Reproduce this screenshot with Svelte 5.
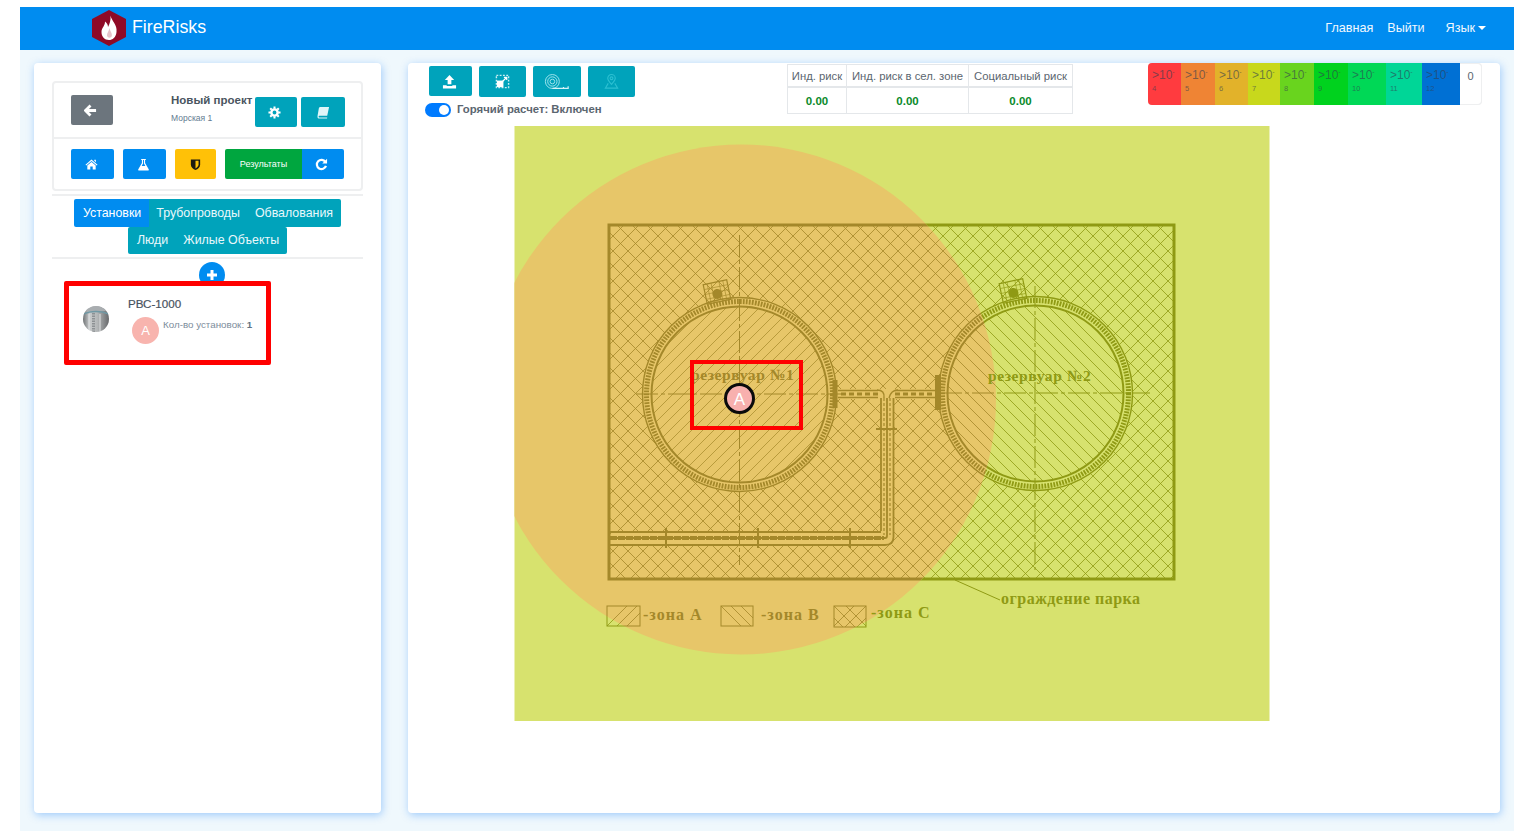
<script>
  const scale = [
    { exp: 4, bg: '#ff3b3f' },
    { exp: 5, bg: '#ef8434' },
    { exp: 6, bg: '#e2b22a' },
    { exp: 7, bg: '#c8d81c' },
    { exp: 8, bg: '#69d41e' },
    { exp: 9, bg: '#00d21e' },
    { exp: 10, bg: '#00d856' },
    { exp: 11, bg: '#00d697' },
    { exp: 12, bg: '#0070d4' }
  ];
  const risks = [
    { label: 'Инд. риск', value: '0.00' },
    { label: 'Инд. риск в сел. зоне', value: '0.00' },
    { label: 'Социальный риск', value: '0.00' }
  ];

  // diagonal hatch lines, cut to shape later by a clip path
  function slashes(x0, y0, size, step) {
    let d = '';
    for (let x = x0; x <= x0 + 2 * size; x += step) d += `M${x} ${y0}L${x - size} ${y0 + size}`;
    return d;
  }
  function backslashes(x0, y0, size, step) {
    let d = '';
    for (let x = x0 - size; x <= x0 + size; x += step) d += `M${x} ${y0}L${x + size} ${y0 + size}`;
    return d;
  }
  const crossHatch = slashes(609, 225, 565, 15) + backslashes(612, 225, 565, 15);
  const hatchA = slashes(640, 295, 200, 11);
  const hatchB = backslashes(936, 294, 200, 12);
</script>

<div class="page">
  <nav class="navbar">
    <div class="brand">
      <svg class="logo" viewBox="0 0 36 38" width="36" height="38">
        <path d="M18 1 L35 10 V28 L18 37 L1 28 V10 Z" fill="#8f0a26" />
        <path d="M19.500 6.500 C20.500 12 26.500 15.500 25.500 23 C25 28.500 21.500 31 18 31 C13.500 31 10.500 27.500 10.500 23 C10.500 18.500 14 17.500 14 12.500 C16 14 17 16 17 18 C18.500 15 20 11.500 19.500 6.500 Z" fill="#fff" />
        <path d="M18.500 19 C19 22.500 21.500 24 20.800 27 C20 29.500 16.500 29.200 16 26.500 C15.800 24 17.800 22.500 18.500 19 Z" fill="#e6c3ca" />
      </svg>
      <span class="brand-name">FireRisks</span>
    </div>
    <div class="nav-links">
      <span>Главная</span>
      <span>Выйти</span>
      <span class="lang">Язык<i class="caret"></i></span>
    </div>
  </nav>

  <div class="content">
    <aside class="card side">
      <div class="project">
        <div class="project-head">
          <button class="btn gray back" aria-label="Назад">
            <svg viewBox="0 0 14 14" width="13" height="13"><path d="M7 1.500 L1.500 7 L7 12.500 M2 7 H13" fill="none" stroke="#fff" stroke-width="3" /></svg>
          </button>
          <div class="project-name">
            <b>Новый проект</b>
            <small>Морская 1</small>
          </div>
          <button class="btn teal gear" aria-label="Настройки">
            <svg viewBox="0 0 14 14" width="13" height="13">
              <circle cx="7" cy="7" r="3.400" fill="none" stroke="#fff" stroke-width="2.600" />
              <path d="M7 0.500 V3 M7 11 V13.500 M0.500 7 H3 M11 7 H13.500 M2.400 2.400 L4 4 M10 10 L11.600 11.600 M11.600 2.400 L10 4 M4 10 L2.400 11.600" stroke="#fff" stroke-width="2.200" />
            </svg>
          </button>
          <button class="btn teal book" aria-label="Справочник">
            <svg viewBox="0 0 14 14" width="13" height="13">
              <path d="M4 1 H13 L11 10.500 H2.500 C1.500 10.500 1.500 12.500 2.500 12.500 H11 L10.800 13.500 H2 C0.500 13.500 0.300 11.500 0.700 10 L2 2.500 C2.200 1.500 3 1 4 1 Z" fill="#dff5f8" />
            </svg>
          </button>
        </div>
        <div class="project-nav">
          <button class="btn blue nav-a" aria-label="Главная">
            <svg viewBox="0 0 14 14" width="13" height="13"><path d="M7 1.500 L13.500 7.200 L12.700 8 L7 3.200 L1.300 8 L0.500 7.200 Z M2.500 8 L7 4.300 L11.500 8 V12.500 H8.300 V9.200 H5.700 V12.500 H2.500 Z M10 2 H11.700 V4.500 L10 3 Z" fill="#fff" /></svg>
          </button>
          <button class="btn blue nav-b" aria-label="Вещества">
            <svg viewBox="0 0 14 14" width="13" height="13"><path d="M4.500 1 H9.500 V2.200 H8.700 V5.500 L12.600 12 C13 12.800 12.500 13.500 11.700 13.500 H2.300 C1.500 13.500 1 12.800 1.400 12 L5.300 5.500 V2.200 H4.500 Z M6.500 2.200 V5.900 L5 8.500 H9 L7.500 5.900 V2.200 Z" fill="#fff" fill-rule="evenodd" /></svg>
          </button>
          <button class="btn yellow nav-c" aria-label="Защита">
            <svg viewBox="0 0 14 14" width="13" height="13"><path d="M2 1.500 H12 V7 C12 10 9.500 12 7 13 C4.500 12 2 10 2 7 Z" fill="#1d1a10" /><path d="M7 3 H10.300 V7 C10.300 9 8.500 10.400 7 11.200 Z" fill="#ffc107" /></svg>
          </button>
          <div class="result-group">
            <button class="btn green results">Результаты</button>
            <button class="btn blue refresh" aria-label="Обновить">
              <svg viewBox="0 0 14 14" width="13" height="13"><path d="M11.200 4.200 A5 5 0 1 0 11.800 8.500" fill="none" stroke="#fff" stroke-width="2.400" /><path d="M13 0.800 V6 H7.800 Z" fill="#fff" /></svg>
            </button>
          </div>
        </div>
      </div>

      <hr class="rule" />

      <div class="tabs">
        <div class="tab-row">
          <span class="tab active">Установки</span>
          <span class="tab">Трубопроводы</span>
          <span class="tab">Обвалования</span>
        </div>
        <div class="tab-row">
          <span class="tab">Люди</span>
          <span class="tab">Жилые Объекты</span>
        </div>
      </div>

      <hr class="rule second" />

      <button class="add" aria-label="Добавить">
        <svg viewBox="0 0 12 12" width="12" height="12"><path d="M6 1 V11 M1 6 H11" stroke="#fff" stroke-width="3" /></svg>
      </button>

      <div class="unit">
        <svg class="unit-icon" viewBox="0 0 26 26" width="26" height="26">
          <defs>
            <linearGradient id="tankGrad" x1="0" x2="1" y1="0" y2="0">
              <stop offset="0" stop-color="#6f7274" />
              <stop offset=".25" stop-color="#c9cccd" />
              <stop offset=".55" stop-color="#b4b7b8" />
              <stop offset="1" stop-color="#67696b" />
            </linearGradient>
            <clipPath id="tankIconClip"><circle cx="13" cy="13" r="13" /></clipPath>
          </defs>
          <g clip-path="url(#tankIconClip)">
            <rect width="26" height="26" fill="url(#tankGrad)" />
            <rect width="26" height="5" fill="#a9adb0" />
            <path d="M0 8 C8 5 18 5 26 8" fill="none" stroke="#6f98a4" stroke-width="1.500" />
            <path d="M10.500 7 V26" stroke="#8d9194" stroke-width="3" stroke-dasharray="1.500 1" />
            <path d="M6 8 V26 M17 8 V26" stroke="#dfe1e2" stroke-width="1" />
          </g>
        </svg>
        <div class="unit-body">
          <div class="unit-name">РВС-1000</div>
          <div class="unit-meta">
            <span class="zone-badge">А</span>
            <span class="unit-count">Кол-во установок: <b>1</b></span>
          </div>
        </div>
      </div>
    </aside>

    <main class="card workspace">
      <div class="top">
        <div class="tools">
          <div class="tool-row">
            <button class="btn teal t1" aria-label="Загрузить">
              <svg viewBox="0 0 16 16" width="15" height="15"><path d="M8 1 L13 6.500 H10 V11 H6 V6.500 H3 Z M1 12 H5 V12.800 H11 V12 H15 V15.500 H1 Z" fill="#fff" /></svg>
            </button>
            <button class="btn teal t2" aria-label="Область">
              <svg viewBox="0 0 16 16" width="15" height="15">
                <rect x="1.500" y="1.500" width="13" height="13" fill="none" stroke="#c9eef4" stroke-width="1.500" stroke-dasharray="2 1.500" />
                <path d="M2 7 H9 V14 H2 Z" fill="#fff" />
                <path d="M8 8 L12 4 M9.500 3.500 H12.500 V6.500" fill="none" stroke="#fff" stroke-width="1.300" />
              </svg>
            </button>
            <button class="btn teal t3" aria-label="Измерение">
              <svg viewBox="0 0 28 18" width="26" height="17" fill="none" stroke="#a5e6ef" stroke-width="1">
                <circle cx="9" cy="9" r="7.500" />
                <circle cx="9" cy="9" r="5" />
                <circle cx="9" cy="9" r="2.500" />
                <path d="M9 16.500 H26 V14 M21 16.500 V15" stroke="#d5f3f7" stroke-width="1.300" />
              </svg>
            </button>
            <button class="btn teal t4" aria-label="Точка">
              <svg viewBox="0 0 16 18" width="15" height="17" fill="none" stroke="#2cc0d2" stroke-width="1.200">
                <path d="M8 12 C5 8.500 4 7.500 4 5.500 A4 4 0 0 1 12 5.500 C12 7.500 11 8.500 8 12 Z" />
                <circle cx="8" cy="5.500" r="1.500" />
                <path d="M4.500 11 L1.500 16 H14.500 L11.500 11" />
              </svg>
            </button>
          </div>
          <div class="hot">
            <span class="switch"><i></i></span>
            <span class="hot-label">Горячий расчет: Включен</span>
          </div>
        </div>

        <div class="risk-table">
          {#each risks as r}
            <div class="risk-head">{r.label}</div>
          {/each}
          {#each risks as r}
            <div class="risk-val">{r.value}</div>
          {/each}
        </div>

        <div class="legend">
          {#each scale as s}
            <div class="seg" style="background: {s.bg}">
              <span class="seg-top">&gt;10<sup>-</sup></span>
              <span class="seg-exp">{s.exp}</span>
            </div>
          {/each}
          <div class="seg zero">0</div>
        </div>
      </div>

      <svg class="map" viewBox="514 126 756 595" width="756" height="595">
        <defs>
          <clipPath id="mapClip"><rect x="514.500" y="126" width="755" height="595" /></clipPath>
          <clipPath id="fenceClip"><rect x="609" y="225" width="565" height="354" /></clipPath>
          <clipPath id="hotClip"><circle cx="741" cy="399.500" r="255" /></clipPath>
          <clipPath id="coldClip">
            <path clip-rule="evenodd" d="M514 126 H1270 V721 H514 Z M486 399.500 A255 255 0 1 0 996 399.500 A255 255 0 1 0 486 399.500 Z" />
          </clipPath>
          <clipPath id="tank1Clip"><circle cx="739.500" cy="394.500" r="88" /></clipPath>
          <clipPath id="tank2Clip"><circle cx="1035.500" cy="393.500" r="88" /></clipPath>
          <mask id="crossMask" maskUnits="userSpaceOnUse" x="514" y="126" width="756" height="595">
            <rect x="514" y="126" width="756" height="595" fill="#fff" />
            <circle cx="739.500" cy="394.500" r="97" fill="#000" />
            <circle cx="1035.500" cy="393.500" r="97" fill="#000" />
            <rect x="838" y="389" width="100" height="10" fill="#000" />
            <rect x="881" y="392" width="12" height="153" fill="#000" />
            <rect x="611" y="532" width="282" height="13" fill="#000" />
          </mask>
          <g id="plan" fill="none" stroke="currentColor">
            <rect x="609" y="225" width="565" height="354" stroke-width="3" />
            <g clip-path="url(#fenceClip)">
              <g mask="url(#crossMask)"><path d={crossHatch} stroke-width=".8" /></g>
            </g>
            <g clip-path="url(#tank1Clip)"><path d={hatchA} stroke-width=".7" /></g>
            <g clip-path="url(#tank2Clip)"><path d={hatchB} stroke-width=".8" /></g>

            <!-- tanks -->
            <circle cx="739.500" cy="394.500" r="97" stroke-width="1.400" />
            <circle cx="739.500" cy="394.500" r="93" stroke-width="5" stroke-dasharray="1.800 1.200" />
            <circle cx="739.500" cy="394.500" r="88" stroke-width="2" />
            <circle cx="1035.500" cy="393.500" r="97" stroke-width="1.400" />
            <circle cx="1035.500" cy="393.500" r="93" stroke-width="5" stroke-dasharray="1.800 1.200" />
            <circle cx="1035.500" cy="393.500" r="88" stroke-width="2" />

            <!-- axes -->
            <path d="M739.500 235 V565 M636 394 H845" stroke-width="1" stroke-dasharray="22 3 4 3" />
            <path d="M1035 286 V570 M940 393 H1150" stroke-width="1" stroke-dasharray="22 3 4 3" />

            <!-- hatches at tank roofs -->
            <g transform="rotate(-12 717 292)">
              <rect x="705" y="282" width="24" height="20" stroke-width="1.200" />
              <path d="M709 282 V302 M713 282 V302 M721 282 V302 M725 282 V302 M705 287 H729 M705 292 H729 M705 297 H729" stroke-width=".6" />
              <circle cx="717" cy="294" r="5" fill="currentColor" stroke="none" />
            </g>
            <g transform="rotate(-12 1013 291)">
              <rect x="1001" y="281" width="24" height="20" stroke-width="1.200" />
              <path d="M1005 281 V301 M1009 281 V301 M1017 281 V301 M1021 281 V301 M1001 286 H1025 M1001 291 H1025 M1001 296 H1025" stroke-width=".6" />
              <circle cx="1013" cy="293" r="5" fill="currentColor" stroke="none" />
            </g>

            <!-- pipes -->
            <path d="M835 380 V408" stroke-width="5" />
            <path d="M938 375 V410" stroke-width="6" />
            <path d="M838 390.500 H878 M838 397.500 H878 M895 390.500 H936 M895 397.500 H936" stroke-width="1.600" />
            <path d="M841 394 H878 M895 394 H936" stroke-width="3" stroke-dasharray="5 3" />
            <path d="M877 390 Q885 390 884 398 M898 390 Q891 390 889 398" stroke-width="1.400" />
            <path d="M881 398 V531 M893.500 398 V537 Q893.500 545 885 545 H610 M887 398 V536 Q887 538 885 538 H610 M610 532 H881" stroke-width="1.800" />
            <path d="M884 398 V535 M890 398 V535" stroke-width="1.200" stroke-dasharray="3 2" />
            <path d="M610 538 H884" stroke-width="4" stroke-dasharray="7 1" />
            <path d="M876 429 H897" stroke-width="2" />
            <path d="M666 528 V548 M758 528 V548 M850 528 V548" stroke-width="2" />

            <!-- leader line -->
            <path d="M955 580 L1000 600" stroke-width="1" />

            <!-- legend boxes -->
            <rect x="607" y="606" width="33" height="20" stroke-width="1" />
            <path d="M607 626 L627 606 M617 626 L637 606 M627 626 L640 613" stroke-width=".8" />
            <rect x="721" y="606" width="32" height="20" stroke-width="1" />
            <path d="M721 606 L741 626 M731 606 L751 626 M741 606 L753 618" stroke-width=".8" />
            <rect x="834" y="606" width="32" height="21" stroke-width="1" />
            <path d="M834 606 L855 627 M846 606 L866 626 M834 618 L843 627 M866 606 L845 627 M854 606 L834 626 M866 618 L857 627" stroke-width=".8" />
          </g>
        </defs>

        <g clip-path="url(#mapClip)">
          <rect x="514" y="126" width="756" height="595" fill="#d7e26e" />
          <circle cx="741" cy="399.500" r="255" fill="#e7c669" />
        </g>
        <g clip-path="url(#hotClip)" style="color: #a4882a"><use href="#plan" /></g>
        <g clip-path="url(#coldClip)" style="color: #8f9a14"><use href="#plan" /></g>

        <g class="plan-text">
          <text class="t-hot tank-name" x="691" y="380">резервуар №1</text>
          <text class="t-cold tank-name" x="988" y="381">резервуар №2</text>
          <text class="t-hot zone" x="643" y="620">-зона А</text>
          <text class="t-hot zone" x="761" y="620">-зона В</text>
          <text class="t-cold zone" x="871" y="618">-зона С</text>
          <text class="t-cold" x="1001" y="604">ограждение парка</text>
        </g>

        <rect class="mark-box" x="692" y="362" width="109" height="66" />
        <circle class="marker" cx="739.500" cy="398.500" r="14" />
        <text class="marker-letter" x="739.500" y="405" text-anchor="middle">А</text>
      </svg>
    </main>
  </div>
</div>

<style>
  :global(body) { margin: 0; background: #fff; font-family: "Liberation Sans", Arial, sans-serif; }

  .page { padding: 7px 0 0 20px; height: 828px; overflow: hidden; }
  button { border: 0; padding: 0; font: inherit; cursor: pointer; display: flex; align-items: center; justify-content: center; }
  .btn { height: 30px; border-radius: 2px; color: #fff; }
  .blue { background: #008cf0; }
  .teal { background: #00a3bb; }
  .gray { background: #6c757d; }
  .yellow { background: #ffc107; }
  .green { background: #00a63f; }
  .back svg, .gear svg, .refresh svg { margin-right: 3px; }
  .nav-a svg, .nav-b svg, .t1 svg { margin-right: 2px; }

  .navbar {
    height: 43px; background: #008cf0; display: flex; align-items: center;
    justify-content: space-between; padding: 0 28px 0 71px;
  }
  .brand { display: flex; align-items: center; gap: 5px; margin-top: -2px; }
  .logo { display: block; }
  .brand-name { font-size: 17.800px; color: #fff; }
  .nav-links { display: flex; font-size: 12.600px; color: #f2f8fe; margin-top: -1px; }
  .nav-links span:first-child { margin-right: 14px; }
  .lang { margin-left: 21px; display: flex; align-items: center; }
  .caret { margin-left: 3px; border: 4px solid transparent; border-top-color: #fff; border-bottom: 0; }

  .content {
    height: 781px; background: #eff8fd; display: flex; gap: 27px;
    padding: 13px 14px 0; box-sizing: border-box;
  }
  .card {
    background: #fff; border-radius: 4px; height: 750px;
    box-shadow: 1px 2px 9px rgba(0, 115, 245, .34);
  }

  .side { width: 347px; flex: none; padding: 18px 18px 0; box-sizing: border-box; }
  .project { border: 2px solid #eeeff0; border-radius: 4px; height: 110px; box-sizing: border-box; }
  .project-head { display: flex; height: 42px; border-bottom: 2px solid #eeeff0; padding: 12px 0 0 17px; }
  .back { width: 42px; }
  .project-name { width: 84px; margin-left: 58px; margin-top: -1px; }
  .project-name b { display: block; font-size: 11.500px; line-height: 13px; font-weight: 700; color: #4a5560; white-space: nowrap; }
  .project-name small { display: block; font-size: 8.500px; line-height: 11px; margin-top: 6px; color: #5f7a90; white-space: nowrap; }
  .gear { width: 42px; margin: 2px 0 0 0; }
  .book { width: 44px; margin: 2px 0 0 4px; }
  .project-nav { display: flex; padding: 10px 0 0 17px; }
  .nav-a { width: 43px; }
  .nav-b { width: 43px; margin-left: 9px; }
  .nav-c { width: 41px; margin-left: 9px; }
  .result-group { display: flex; margin-left: 9px; }
  .results { width: 77px; font-size: 9px; border-radius: 2px 0 0 2px; }
  .refresh { width: 42px; border-radius: 0 2px 2px 0; }

  .rule { border: 0; border-top: 2px solid #eeeff0; margin: 3px 0 0; }
  .rule.second { margin-top: 3px; }
  .tabs { margin-top: 3px; font-size: 12.400px; color: #e9f8fb; }
  .tab-row { display: flex; justify-content: center; height: 27.500px; }
  .tab { background: #00a3bb; padding: 0 7.500px; display: flex; align-items: center; white-space: nowrap; }
  .tab:first-child { border-radius: 2px 0 0 2px; padding-left: 8.500px; }
  .tab:last-child { border-radius: 0 2px 2px 0; }
  .tab.active { background: #008cf0; color: #fff; }

  .add {
    width: 26px; height: 26px; border-radius: 50%; background: #008cf0;
    margin: 3px 0 -7px 147px; position: relative;
  }
  .unit {
    position: relative; width: 207px; height: 84px; margin-left: 12px; box-sizing: border-box;
    border: 5px solid #ff0000; border-radius: 2px; background: #fff;
    display: flex; padding: 12px 0 0 14px;
  }
  .unit-icon { flex: none; margin-top: 8px; }
  .unit-body { margin-left: 19px; }
  .unit-name { font-size: 11.600px; line-height: 14px; color: #47525e; margin-top: -1px; -webkit-text-stroke: .2px #47525e; }
  .unit-meta { display: flex; margin: 6px 0 0 4px; }
  .zone-badge {
    width: 27px; height: 27px; border-radius: 50%; background: #f8b4ae; color: #fff;
    font-size: 13px; display: flex; align-items: center; justify-content: center; flex: none;
  }
  .unit-count { font-size: 9.800px; line-height: 11px; color: #7d8d9c; margin: 2px 0 0 4px; white-space: nowrap; }
  .unit-count b { color: #5f7284; }

  .workspace { width: 1092px; flex: none; }
  .top { display: flex; align-items: flex-start; height: 63px; }
  .tools { width: 379px; flex: none; padding: 3px 0 0 17px; box-sizing: border-box; }
  .tool-row { display: flex; gap: 7px; padding-left: 4px; }
  .t1 { width: 43px; }
  .t2 { width: 47px; height: 31px; }
  .t3 { width: 48px; height: 31px; }
  .t4 { width: 47px; height: 31px; }
  .hot { display: flex; align-items: center; margin-top: 6px; }
  .switch { width: 26px; height: 14px; border-radius: 7px; background: #007bff; position: relative; display: block; }
  .switch i { position: absolute; right: 2px; top: 2px; width: 10px; height: 10px; border-radius: 50%; background: #fff; }
  .hot-label { font-size: 11.350px; font-weight: 700; color: #5b6670; margin: -2px 0 0 6px; white-space: nowrap; }

  .risk-table {
    width: 286px; flex: none; display: grid; grid-template-columns: 60px 122px 104px;
    margin-top: 1px; border-bottom: 1px solid #e4e7ea; box-sizing: border-box;
  }
  .risk-head {
    height: 24px; font-size: 11.300px; color: #5b6670; display: flex; align-items: center; justify-content: center;
    border: solid #e4e7ea; border-width: 1px 1px 2px 0; box-sizing: border-box; white-space: nowrap;
  }
  .risk-val {
    height: 25px; font-size: 11.500px; font-weight: 700; color: #0a8a2a; display: flex; align-items: center; justify-content: center;
    border-right: 1px solid #e4e7ea; box-sizing: border-box;
  }
  .risk-head:nth-child(1), .risk-val:nth-child(4) { border-left: 1px solid #e4e7ea; }

  .legend {
    width: 334px; height: 42px; margin-left: 75px; flex: none; display: grid;
    grid-template-columns: 33px 34px 33px 32px 34px 34px 38px 36px 38px 22px;
    border-radius: 4px; overflow: hidden; box-shadow: inset 0 0 0 1px #eeeff0;
  }
  .seg { padding: 6px 0 0 4px; color: rgba(50, 62, 80, .62); box-sizing: border-box; }
  .seg-top { display: block; font-size: 12px; line-height: 13px; }
  .seg-top sup { font-size: 7px; line-height: 0; }
  .seg-exp { display: block; font-size: 7.500px; line-height: 10px; margin-top: 2px; }
  .zero { color: #5b6670; font-size: 11px; text-align: center; padding: 6px 0 0; border: solid #eeeff0; border-width: 1px 1px 1px 0; border-radius: 0 4px 4px 0; }

  .map { display: block; margin-left: 106px; }
  .plan-text text { font-family: "Liberation Serif", serif; font-weight: 700; font-size: 16px; letter-spacing: .5px; }
  .plan-text .tank-name { font-size: 15.500px; letter-spacing: .6px; }
  .plan-text .zone { letter-spacing: 1px; }
  .t-hot { fill: #a4882a; }
  .t-cold { fill: #8f9a14; }
  .mark-box { fill: none; stroke: #ff0000; stroke-width: 4; }
  .marker { fill: #f8b0ae; stroke: #0b0b0b; stroke-width: 3; }
  .marker-letter { fill: #fff; font-family: "Liberation Sans", sans-serif; font-size: 17px; }
</style>
